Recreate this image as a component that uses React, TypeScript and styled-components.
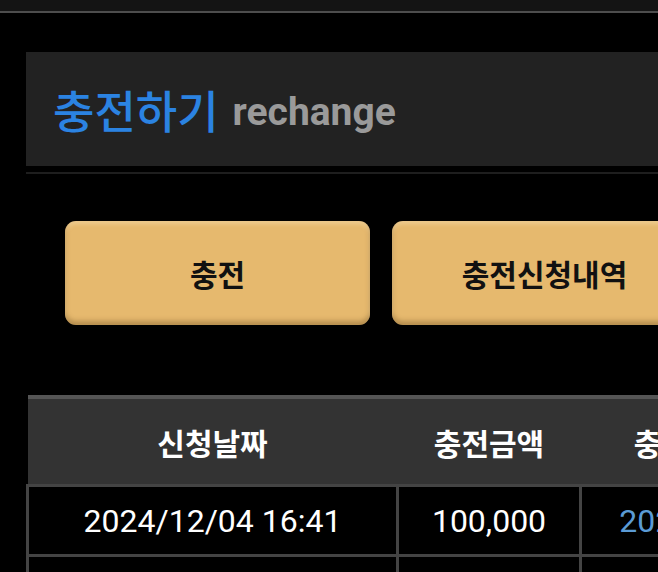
import React from 'react';
import styled, { createGlobalStyle } from 'styled-components';

const GlobalStyle = createGlobalStyle`
	html, body {
		margin: 0;
		padding: 0;
		background: #000;
		overflow: hidden;
	}
	body {
		font-family: Roboto, 'Noto Sans CJK KR', sans-serif;
	}
`;

const TopBar = styled.div`
	height: 11px;
	background: #141414;
	border-bottom: 2px solid #4d4d4d;
`;

const Content = styled.div`
	padding: 39px 0 0 26px;
	width: 900px;
`;

const TitleBox = styled.div`
	height: 114px;
	background: #222;
	display: flex;
	align-items: center;
	padding-left: 27px;
	gap: 14px;
`;

const Title = styled.h2`
	margin: 0;
	font-size: 45px;
	font-weight: 500;
	color: #2b83e2;
	font-family: 'Noto Sans CJK KR', sans-serif;
	line-height: 1;
`;

const SubTitle = styled.span`
	font-size: 39px;
	font-weight: 700;
	color: #9a9a9a;
	font-family: Roboto, sans-serif;
	line-height: 1;
	margin-top: 6px;
`;

const Divider = styled.div`
	margin-top: 6px;
	height: 2px;
	background: #1e1e1e;
`;

const ButtonRow = styled.div`
	display: flex;
	gap: 22px;
	padding: 47px 0 0 39px;
`;

const Button = styled.button`
	width: 305px;
	height: 104px;
	border: none;
	border-radius: 11px;
	background: #e6b96e;
	box-shadow: inset 0 -4px 5px rgba(90, 60, 20, 0.35), inset 0 3px 4px rgba(255, 240, 210, 0.35);
	font-family: 'Noto Sans CJK KR', sans-serif;
	font-size: 30px;
	font-weight: 700;
	color: #111;
	padding: 0;
`;

const Table = styled.table`
	margin-top: 70px;
	border-collapse: collapse;
	table-layout: fixed;
	width: 825px;
	font-family: Roboto, 'Noto Sans CJK KR', sans-serif;
`;

const HeadCell = styled.th`
	height: 85px;
	background: #333;
	border-top: 4px solid #555;
	color: #fff;
	font-size: 30px;
	font-weight: 700;
	font-family: 'Noto Sans CJK KR', sans-serif;
	padding: 0;
`;

const Cell = styled.td<{ $link?: boolean }>`
	height: 67px;
	border: 3px solid #444;
	color: ${p => (p.$link ? '#5b9bd5' : '#fff')};
	font-size: 32px;
	text-align: center;
	padding: 0 ${p => (p.$link ? '24px' : '0')} 0 0;
	white-space: nowrap;
`;

const rows = [
	{ date: '2024/12/04 16:41', amount: '100,000', done: '2024/12/04' },
	{ date: '2024/11/28 20:13', amount: '50,000', done: '2024/11/28' },
];

export default function App() {
	return (
		<>
			<GlobalStyle />
			<TopBar />
			<Content>
				<TitleBox>
					<Title>충전하기</Title>
					<SubTitle>rechange</SubTitle>
				</TitleBox>
				<Divider />
				<ButtonRow>
					<Button>충전</Button>
					<Button>충전신청내역</Button>
				</ButtonRow>
				<Table>
					<colgroup>
						<col style={{ width: 370 }} />
						<col style={{ width: 183 }} />
						<col style={{ width: 272 }} />
					</colgroup>
					<thead>
						<tr>
							<HeadCell>신청날짜</HeadCell>
							<HeadCell>충전금액</HeadCell>
							<HeadCell>충전완료일시</HeadCell>
						</tr>
					</thead>
					<tbody>
						{rows.map(row => (
							<tr key={row.date}>
								<Cell>{row.date}</Cell>
								<Cell>{row.amount}</Cell>
								<Cell $link>{row.done}</Cell>
							</tr>
						))}
					</tbody>
				</Table>
			</Content>
		</>
	);
}
